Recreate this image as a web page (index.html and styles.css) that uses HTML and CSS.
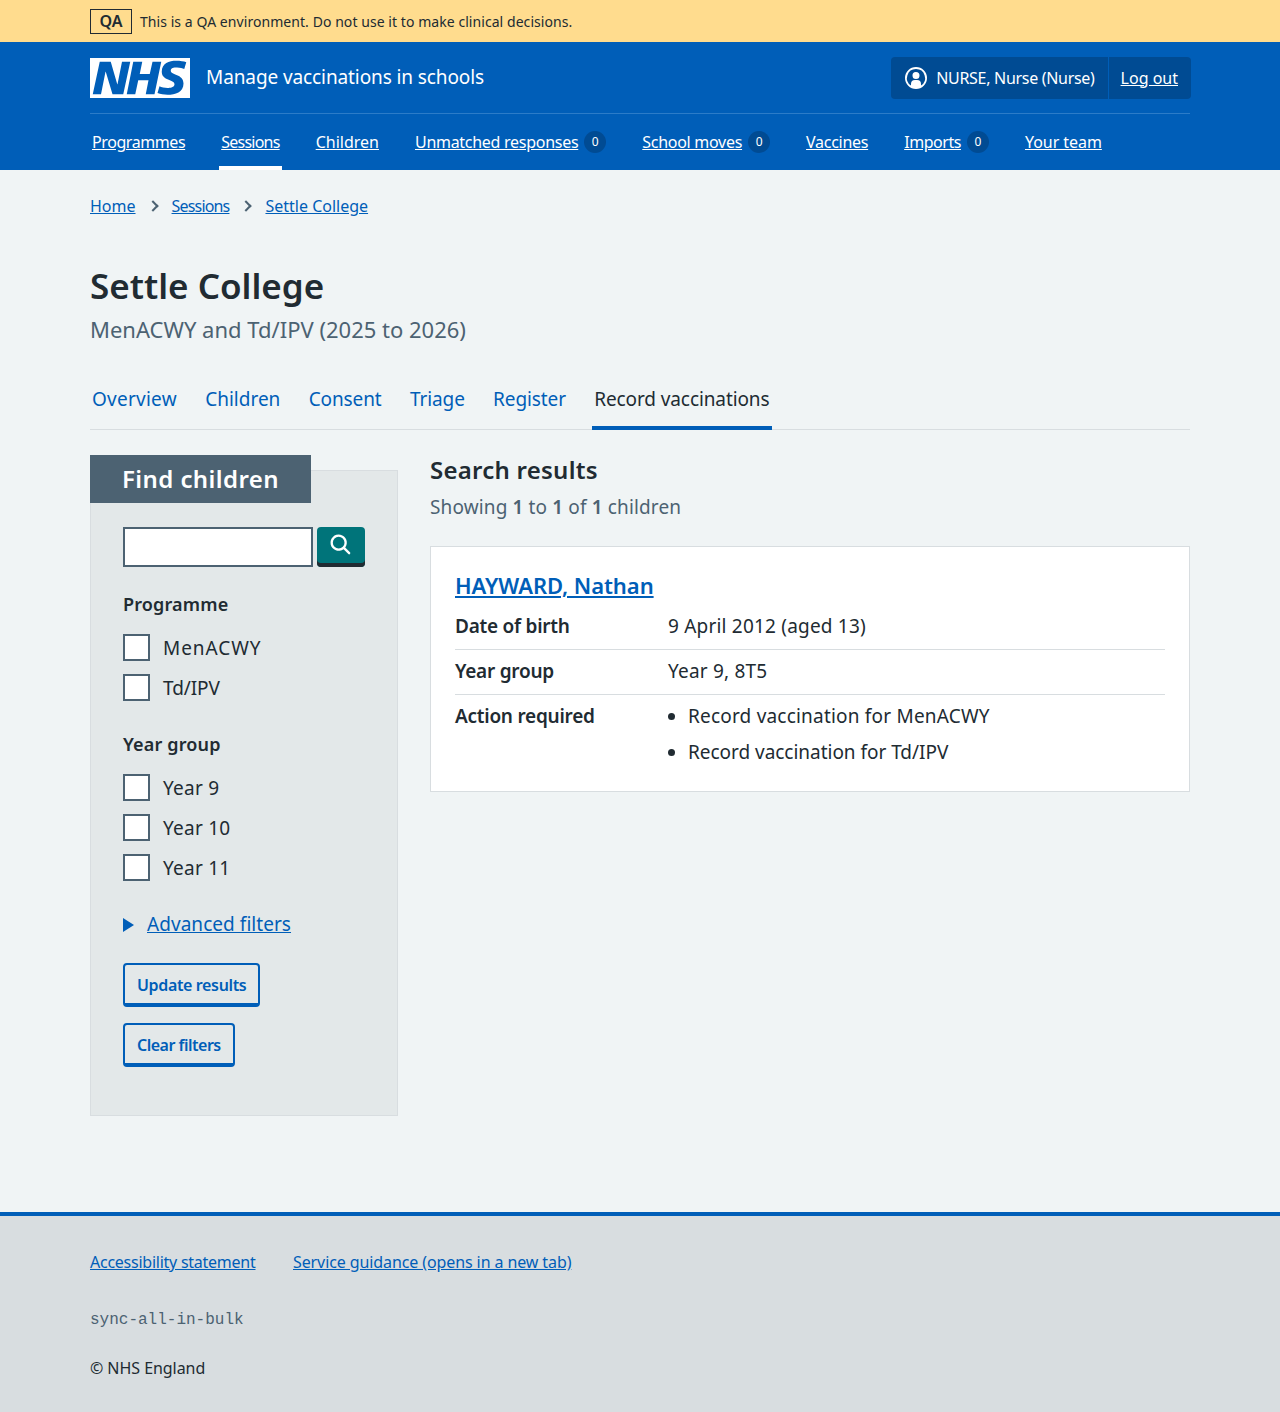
FILE: index.html
```html
<!DOCTYPE html>
<html lang="en">
<head>
    <meta charset="UTF-8">
    <meta name="viewport" content="width=device-width, initial-scale=1.0">
    <title>Settle College – Manage vaccinations in schools</title>
    <link rel="stylesheet" href="styles.css">
</head>
<body>
    <div class="env-banner">
        <div class="container env-inner">
            <strong class="env-tag">QA</strong>
            <span class="env-text">This is a QA environment. Do not use it to make clinical decisions.</span>
        </div>
    </div>

    <header class="header">
        <div class="container">
            <div class="header-top">
                <a class="brand" href="#">
                    <svg class="logo" viewBox="0 0 40 16" aria-label="NHS">
                        <path fill="#fff" d="M0 0h40v16H0z"/>
                        <path fill="#005eb8" d="M3.9 1.5h4.4l2.6 9h.1l1.8-9h3.3l-2.8 13H9l-2.7-9h-.1l-1.8 9H1.1M17.3 1.5h3.6l-1 4.9h4L25 1.5h3.5l-2.7 13h-3.5l1.1-5.6h-4.1l-1.2 5.6h-3.4M37.7 4.4c-.7-.3-1.6-.6-2.9-.6-1.4 0-2.5.2-2.5 1.3 0 1.8 5.1 1.2 5.1 5.1 0 3.6-3.3 4.5-6.4 4.5-1.3 0-2.9-.3-4-.7l.8-2.7c.7.4 2.1.7 3.2.7s2.8-.2 2.8-1.5c0-2.1-5.1-1.3-5.1-5 0-3.4 2.9-4.4 5.8-4.4 1.6 0 3.1.2 4 .6"/>
                    </svg>
                    <span class="service-name">Manage vaccinations in schools</span>
                </a>
                <div class="account">
                    <div class="account-user">
                        <svg class="account-icon" viewBox="0 0 24 24">
                            <path fill="#fff" d="M12 1a11 11 0 1 1 0 22 11 11 0 0 1 0-22Zm0 2a9 9 0 0 0-5 16.5V18a4 4 0 0 1 4-4h2a4 4 0 0 1 4 4v1.5A9 9 0 0 0 12 3Zm0 3a3.5 3.5 0 1 1-3.5 3.5A3.4 3.4 0 0 1 12 6Z"/>
                        </svg>
                        <span class="account-name">NURSE, Nurse (Nurse)</span>
                    </div>
                    <a class="account-link" href="#">Log out</a>
                </div>
            </div>
            <nav class="nav">
                <a class="nav-item" href="#"><span class="nav-label nav-first">Programmes</span></a>
                <a class="nav-item nav-item-active" href="#"><span class="nav-label nav-sessions">Sessions</span></a>
                <a class="nav-item" href="#"><span class="nav-label nav-loose">Children</span></a>
                <a class="nav-item" href="#"><span class="nav-label">Unmatched responses</span><span class="count">0</span></a>
                <a class="nav-item" href="#"><span class="nav-label">School moves</span><span class="count">0</span></a>
                <a class="nav-item" href="#"><span class="nav-label">Vaccines</span></a>
                <a class="nav-item" href="#"><span class="nav-label nav-imports">Imports</span><span class="count">0</span></a>
                <a class="nav-item" href="#"><span class="nav-label nav-team">Your team</span></a>
            </nav>
        </div>
    </header>

    <div class="container">
        <ol class="breadcrumb">
            <li><a href="#">Home</a></li>
            <li><a class="crumb-tight" href="#">Sessions</a></li>
            <li><a href="#">Settle College</a></li>
        </ol>

        <main class="main">
            <h1 class="title">Settle College</h1>
            <p class="subtitle">MenACWY and Td/IPV (2025 to 2026)</p>

            <ul class="tabs">
                <li><a class="tab-wide" href="#">Overview</a></li>
                <li><a class="tab-even" href="#">Children</a></li>
                <li><a href="#">Consent</a></li>
                <li><a href="#">Triage</a></li>
                <li><a href="#">Register</a></li>
                <li class="tab-active"><a href="#">Record vaccinations</a></li>
            </ul>

            <div class="columns">
                <aside class="filters">
                    <h2 class="filters-title">Find children</h2>
                    <div class="filters-body">
                        <div class="search-row">
                            <input class="search-input" type="text" aria-label="Search">
                            <button class="search-btn" aria-label="Search">
                                <svg viewBox="0 0 24 24" width="28" height="28">
                                    <path fill="#fff" d="M19.71 18.29l-4.11-4.1a7 7 0 1 0-1.41 1.41l4.1 4.11a1 1 0 0 0 1.42 0 1 1 0 0 0 0-1.42zM5 10a5 5 0 1 1 5 5 5 5 0 0 1-5-5z"/>
                                </svg>
                            </button>
                        </div>

                        <fieldset class="group">
                            <legend class="group-label">Programme</legend>
                            <label class="check"><span class="box"></span><span class="check-wide">MenACWY</span></label>
                            <label class="check"><span class="box"></span><span class="check-narrow">Td/IPV</span></label>
                        </fieldset>

                        <fieldset class="group">
                            <legend class="group-label">Year group</legend>
                            <label class="check"><span class="box"></span>Year 9</label>
                            <label class="check"><span class="box"></span>Year 10</label>
                            <label class="check"><span class="box"></span>Year 11</label>
                        </fieldset>

                        <div class="advanced">
                            <span class="arrow"></span>
                            <a href="#">Advanced filters</a>
                        </div>

                        <div class="actions">
                            <a class="btn" href="#">Update results</a>
                            <a class="btn" href="#">Clear filters</a>
                        </div>
                    </div>
                </aside>

                <section class="results">
                    <h2 class="results-title">Search results</h2>
                    <p class="results-count">Showing <b>1</b> to <b>1</b> of <b>1</b> children</p>

                    <div class="card">
                        <h3 class="card-title"><a href="#">HAYWARD, Nathan</a></h3>
                        <dl class="summary">
                            <div class="summary-row">
                                <dt>Date of birth</dt>
                                <dd>9 April 2012 (aged 13)</dd>
                            </div>
                            <div class="summary-row">
                                <dt>Year group</dt>
                                <dd>Year 9, 8T5</dd>
                            </div>
                            <div class="summary-row">
                                <dt>Action required</dt>
                                <dd>
                                    <ul class="action-list">
                                        <li>Record vaccination for MenACWY</li>
                                        <li>Record vaccination for Td/IPV</li>
                                    </ul>
                                </dd>
                            </div>
                        </dl>
                    </div>
                </section>
            </div>
        </main>
    </div>

    <footer class="footer">
        <div class="container">
            <div class="footer-links">
                <a href="#">Accessibility statement</a>
                <a href="#">Service guidance (opens in a new tab)</a>
            </div>
            <div class="footer-version">sync-all-in-bulk</div>
            <div class="footer-copy">© NHS England</div>
        </div>
    </footer>
</body>
</html>
```

FILE: styles.css
```css
* {
    box-sizing: border-box;
}

body {
    margin: 0;
    font-family: "Noto Sans", Arial, sans-serif;
    font-size: 19px;
    line-height: 28px;
    color: #212b32;
    background-color: #f0f4f5;
}

a {
    color: #005eb8;
}

.container {
    width: 1100px;
    margin: 0 0 0 90px;
}

/* QA banner */
.env-banner {
    height: 42px;
    background-color: #ffdc8e;
    font-size: 14px;
}

.env-inner {
    display: flex;
    align-items: center;
    gap: 8px;
    height: 42px;
}

.env-tag {
    display: block;
    width: 42px;
    height: 25px;
    border: 1px solid #212b32;
    font-size: 16px;
    line-height: 23px;
    font-weight: 600;
    text-align: center;
}

.env-text {
    padding-top: 2px;
    letter-spacing: 0.06px;
}

/* Header */
.header {
    height: 128px;
    background-color: #005eb8;
    color: #fff;
}

.header a {
    color: #fff;
}

.header-top {
    display: flex;
    justify-content: space-between;
    align-items: center;
    height: 72px;
    border-bottom: 1px solid #2c7cc8;
}

.brand {
    display: flex;
    align-items: center;
    gap: 16px;
    text-decoration: none;
}

.logo {
    display: block;
    width: 100px;
    height: 40px;
}

.service-name {
    padding-bottom: 2px;
    font-size: 19px;
    letter-spacing: -0.1px;
}

.account {
    display: flex;
    height: 42px;
    margin-right: -1px;
    background-color: #004b93;
    border-radius: 4px;
    font-size: 16px;
    line-height: 42px;
}

.account-user {
    display: flex;
    align-items: center;
    gap: 8px;
    padding: 0 13px;
    border-right: 1px solid #005eb8;
}

.account-icon {
    width: 24px;
    height: 24px;
}

.account-name {
    letter-spacing: -0.3px;
}

.account-link {
    padding: 0 13px 0 12px;
}

.nav {
    display: flex;
    height: 56px;
    font-size: 16px;
}

.nav-item {
    display: flex;
    align-items: center;
    height: 56px;
    padding: 0 2px;
    margin-right: 32px;
    text-decoration: none;
}

.nav-item-active {
    box-shadow: inset 0 -4px 0 #fff;
}

.nav-label {
    text-decoration: underline;
    letter-spacing: -0.28px;
}

.nav-first {
    letter-spacing: -0.42px;
}

.nav-sessions {
    letter-spacing: -0.75px;
}

.nav-imports {
    letter-spacing: -0.45px;
}

.nav-team {
    letter-spacing: -0.05px;
}

.nav-loose {
    letter-spacing: 0;
}

.count {
    display: block;
    width: 22px;
    height: 22px;
    margin-left: 6px;
    border-radius: 50%;
    background-color: #004b93;
    font-size: 12px;
    line-height: 22px;
    text-align: center;
}

/* Breadcrumb */
.breadcrumb {
    display: flex;
    margin: 0;
    padding: 24px 0 0;
    list-style: none;
    font-size: 16px;
    line-height: 24px;
}

.breadcrumb li + li::before {
    content: "";
    display: inline-block;
    width: 6px;
    height: 6px;
    margin: 0 15px 2px 13px;
    border-top: 2px solid #4c6272;
    border-right: 2px solid #4c6272;
    transform: rotate(45deg);
}

.crumb-tight {
    letter-spacing: -0.82px;
}

/* Page heading */
.main {
    padding-top: 44px;
}

.title {
    margin: 0;
    font-size: 35px;
    line-height: 48px;
    font-weight: 600;
}

.subtitle {
    margin: 3px 0 0;
    font-size: 22px;
    line-height: 32px;
    color: #4c6272;
}

/* Tabs */
.tabs {
    display: flex;
    gap: 24.3px;
    margin: 31px 0 25px;
    padding: 0;
    list-style: none;
    border-bottom: 1px solid #d8dde0;
    height: 54px;
}

.tabs li {
    height: 54px;
    padding: 8px 2px 0;
    line-height: 30px;
    letter-spacing: -0.1px;
}

.tabs a {
    text-decoration: none;
}

.tabs .tab-wide {
    letter-spacing: 0.25px;
}

.tabs .tab-even {
    letter-spacing: 0;
}

.tab-active {
    border-bottom: 4px solid #005eb8;
}

.tab-active a {
    color: #212b32;
    letter-spacing: -0.1px;
}

/* Layout */
.columns {
    display: flex;
    align-items: flex-start;
    gap: 32px;
}

/* Filter panel */
.filters {
    width: 308px;
    height: 646px;
    margin-top: 15px;
    background-color: #e3e8e9;
    border: 1px solid #d8dde0;
}

.filters-title {
    width: 221px;
    height: 48px;
    margin: -16px 0 0 -1px;
    padding-left: 32px;
    background-color: #4c6272;
    color: #fff;
    font-size: 24px;
    line-height: 48px;
    font-weight: 600;
    letter-spacing: 0.42px;
}

.filters-body {
    padding: 24px 32px 0;
}

.search-row {
    display: flex;
    gap: 4px;
    margin-bottom: 23px;
}

.search-input {
    width: 190px;
    height: 40px;
    padding: 0 8px;
    border: 2px solid #4c6272;
    border-radius: 0;
    background-color: #fff;
}

.search-btn {
    display: flex;
    align-items: center;
    justify-content: center;
    width: 48px;
    height: 40px;
    padding: 0 0 4px;
    border: none;
    border-radius: 4px;
    background-color: #00747a;
    box-shadow: inset 0 -4px 0 #212b32;
}

.group {
    margin: 0;
    padding: 0;
    border: none;
}

.group + .group {
    margin-top: 21px;
}

.group-label {
    padding: 0;
    margin-bottom: 11px;
    font-size: 18px;
    font-weight: 600;
    letter-spacing: 0.15px;
}

.check {
    display: flex;
    align-items: center;
    gap: 13px;
    height: 40px;
    padding-bottom: 2px;
    letter-spacing: 0.25px;
}

.check-wide {
    letter-spacing: 0.95px;
}

.check-narrow {
    letter-spacing: -0.1px;
}

.box {
    display: block;
    width: 27px;
    height: 27px;
    margin-bottom: 2px;
    border: 2px solid #4c6272;
    background-color: #fff;
}

.advanced {
    display: flex;
    align-items: center;
    gap: 13px;
    margin-top: 21px;
    letter-spacing: 0.05px;
}

.arrow {
    display: block;
    width: 0;
    height: 0;
    margin-top: 2px;
    border-top: 7px solid transparent;
    border-bottom: 7px solid transparent;
    border-left: 11px solid #005eb8;
}

.actions {
    display: flex;
    flex-direction: column;
    align-items: flex-start;
    gap: 16px;
    margin-top: 25px;
}

.btn {
    display: block;
    height: 44px;
    padding: 0 12px;
    border: 2px solid #005eb8;
    border-bottom-width: 4px;
    border-radius: 4px;
    font-size: 16px;
    line-height: 40px;
    font-weight: 600;
    letter-spacing: -0.42px;
    text-decoration: none;
}

.btn:first-child {
    letter-spacing: -0.36px;
}

.btn:last-child {
    letter-spacing: -0.5px;
}

/* Results */
.results {
    width: 760px;
}

.results-title {
    margin: 0;
    font-size: 24px;
    line-height: 30px;
    font-weight: 600;
    letter-spacing: 0.25px;
}

.results-count {
    margin: 8px 0 25px;
    color: #4c6272;
    letter-spacing: 0.13px;
}

.results-count b {
    font-weight: 600;
}

.card {
    height: 246px;
    padding: 22px 24px 0;
    background-color: #fff;
    border: 1px solid #d8dde0;
}

.card-title {
    margin: 0 0 4px;
    font-size: 22px;
    line-height: 32px;
    font-weight: 600;
    letter-spacing: -0.07px;
}

.summary {
    margin: 0;
}

.summary-row {
    display: flex;
    padding: 7px 0 9px;
    border-bottom: 1px solid #d8dde0;
}

.summary-row:last-child {
    border-bottom: none;
}

.summary-row dt {
    width: 213px;
    font-weight: 600;
    letter-spacing: -0.25px;
}

.summary-row dd {
    margin: 0;
    letter-spacing: 0.2px;
}

.action-list {
    margin: 0;
    padding-left: 20px;
}

.action-list li + li {
    margin-top: 8px;
    letter-spacing: -0.03px;
}

/* Footer */
.footer {
    height: 200px;
    margin-top: 96px;
    padding-top: 32px;
    background-color: #d8dde0;
    border-top: 4px solid #005eb8;
    font-size: 16px;
}

.footer-links {
    display: flex;
    gap: 37.5px;
    letter-spacing: -0.1px;
}

.footer-links a:first-child {
    letter-spacing: -0.25px;
}

.footer-version {
    margin-top: 30px;
    font-family: "Liberation Mono", monospace;
    color: #4c6272;
}

.footer-copy {
    margin-top: 20px;
    letter-spacing: -0.05px;
}
```
